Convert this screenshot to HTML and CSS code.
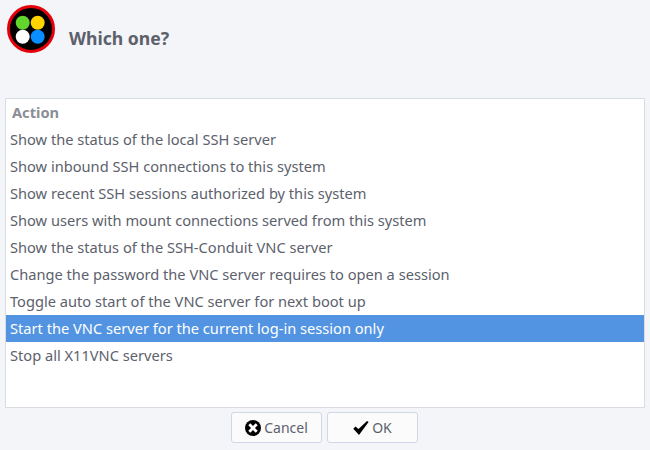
FILE: index.html
```html
<!DOCTYPE html>
<html lang="en">
<head>
    <meta charset="UTF-8">
    <title>Which one?</title>
    <link rel="stylesheet" href="styles.css">
</head>
<body>
    <div class="dialog">
        <header class="dialog-header">
            <svg class="app-icon" width="48" height="48" viewBox="0 0 48 48" aria-hidden="true">
                <circle cx="24" cy="24" r="22.5" fill="#000" stroke="#e3000b" stroke-width="3"/>
                <circle cx="15.7" cy="17.7" r="7" fill="#63d62e"/>
                <circle cx="30.7" cy="17.7" r="7" fill="#ffd500"/>
                <circle cx="15.7" cy="31.7" r="7" fill="#fff"/>
                <circle cx="30.7" cy="31.7" r="7" fill="#0a8dff"/>
            </svg>
            <h1>Which one?</h1>
        </header>

        <div class="list-box">
            <div class="list-head">Action</div>
            <div class="list-row">Show the status of the local SSH server</div>
            <div class="list-row">Show inbound SSH connections to this system</div>
            <div class="list-row">Show recent SSH sessions authorized by this system</div>
            <div class="list-row">Show users with mount connections served from this system</div>
            <div class="list-row">Show the status of the SSH-Conduit VNC server</div>
            <div class="list-row">Change the password the VNC server requires to open a session</div>
            <div class="list-row">Toggle auto start of the VNC server for next boot up</div>
            <div class="list-row selected">Start the VNC server for the current log-in session only</div>
            <div class="list-row">Stop all X11VNC servers</div>
        </div>

        <div class="button-row">
            <button class="btn" type="button">
                <svg width="16" height="16" viewBox="0 0 16 16" aria-hidden="true">
                    <circle cx="8" cy="8" r="8" fill="#000"/>
                    <path d="M4.3 4.3l7.4 7.4M11.7 4.3l-7.4 7.4" stroke="#fff" stroke-width="2.8" fill="none"/>
                </svg>
                Cancel
            </button>
            <button class="btn" type="button">
                <svg width="16" height="16" viewBox="0 0 16 16" aria-hidden="true">
                    <path d="M0.3 8.7l2.2-2.2 3 2.6L14 1l1.6 1L6 15z" fill="#000"/>
                </svg>
                OK
            </button>
        </div>
    </div>
</body>
</html>
```

FILE: styles.css
```css
:root {
    --bg-color: #f4f5f8;
    --text-color: #5c616c;
    --border-color: #d9dce2;
    --select-bg: #5294e2;
}

* {
    box-sizing: border-box;
}

body {
    margin: 0;
    width: 650px;
    height: 450px;
    overflow: hidden;
    background-color: var(--bg-color);
    color: var(--text-color);
    font-family: "Noto Sans", sans-serif;
    font-size: 14.63px;
}

.dialog {
    display: flex;
    flex-direction: column;
    height: 100%;
    padding: 5px 5px 7px;
}

.dialog-header {
    display: flex;
    align-items: flex-start;
    gap: 14px;
    height: 93px;
    padding: 0 0 14px 2px;
}

.app-icon {
    flex: none;
}

h1 {
    margin: 20px 0 0;
    font-size: 17.6px;
    line-height: 26px;
    font-weight: 700;
}

.list-box {
    flex: none;
    height: 310px;
    background-color: #fff;
    border: 1px solid var(--border-color);
}

.list-head {
    height: 27px;
    line-height: 27px;
    padding-left: 6px;
    font-weight: 700;
    color: #8b8e96;
}

.list-row {
    height: 27px;
    line-height: 27px;
    padding-left: 4px;
    white-space: nowrap;
}

.list-row.selected {
    background-color: var(--select-bg);
    color: #fff;
}

.button-row {
    display: flex;
    justify-content: center;
    gap: 5px;
    margin-top: 4px;
    padding-right: 1px;
}

.btn {
    display: flex;
    align-items: center;
    justify-content: center;
    gap: 3px;
    width: 91px;
    height: 31px;
    padding: 0;
    background-color: #fbfbfc;
    border: 1px solid #cfd6e6;
    border-radius: 3px;
    color: var(--text-color);
    font-family: inherit;
    font-size: 14px;
}
```
